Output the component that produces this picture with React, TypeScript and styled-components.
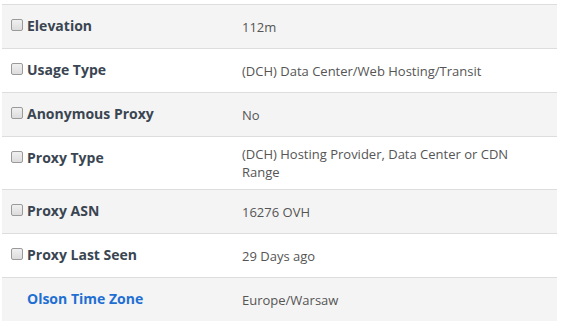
import React from 'react';
import styled, { createGlobalStyle } from 'styled-components';

const GlobalStyle = createGlobalStyle`
  body {
    margin: 0;
    background: #fff;
    font-family: "Open Sans", "Liberation Sans", sans-serif;
  }
`;

const Wrapper = styled.div`
  padding: 4px 4px 0 2px;
`;

const Table = styled.div`
  width: 555px;
  display: flex;
  flex-direction: column;
`;

const Row = styled.div<{ $striped: boolean }>`
  display: grid;
  grid-template-columns: 232px 1fr;
  border-top: 1px solid #dddddd;
  background: ${(p) => (p.$striped ? '#f4f4f4' : '#ffffff')};
`;

const LabelCell = styled.div<{ $link?: boolean }>`
  padding: 7px 8px 9px 8px;
  display: flex;
  align-items: center;
  align-self: start;
  height: 27px;
  font-size: 14px;
  font-weight: 700;
  color: ${(p) => (p.$link ? '#1f6fd3' : '#3a4552')};
  white-space: nowrap;
`;

const ValueCell = styled.div`
  padding: 8px;
  align-self: center;
  font-size: 13px;
  line-height: 18px;
  color: #555555;
  max-width: 300px;
`;

const Check = styled.span<{ $blank?: boolean }>`
  box-sizing: border-box;
  width: 12px;
  height: 12px;
  margin: 0 4px 1px 1px;
  flex-shrink: 0;
  border: 1px solid ${(p) => (p.$blank ? 'transparent' : '#9a9a9a')};
  border-radius: 2px;
  background: ${(p) => (p.$blank ? 'transparent' : 'linear-gradient(#f0f0f0, #dcdcdc)')};
`;

type Item = { label: string; value: string; link?: boolean };

const items: Item[] = [
  { label: 'Elevation', value: '112m' },
  { label: 'Usage Type', value: '(DCH) Data Center/Web Hosting/Transit' },
  { label: 'Anonymous Proxy', value: 'No' },
  { label: 'Proxy Type', value: '(DCH) Hosting Provider, Data Center or CDN Range' },
  { label: 'Proxy ASN', value: '16276 OVH' },
  { label: 'Proxy Last Seen', value: '29 Days ago' },
  { label: 'Olson Time Zone', value: 'Europe/Warsaw', link: true },
];

function App() {
  return (
    <Wrapper>
      <GlobalStyle />
      <Table>
        {items.map((item, index) => (
          <Row key={item.label} $striped={index % 2 === 0}>
            <LabelCell $link={item.link}>
              <Check $blank={item.link} />
              {item.label}
            </LabelCell>
            <ValueCell>{item.value}</ValueCell>
          </Row>
        ))}
      </Table>
    </Wrapper>
  );
}

export default App;
